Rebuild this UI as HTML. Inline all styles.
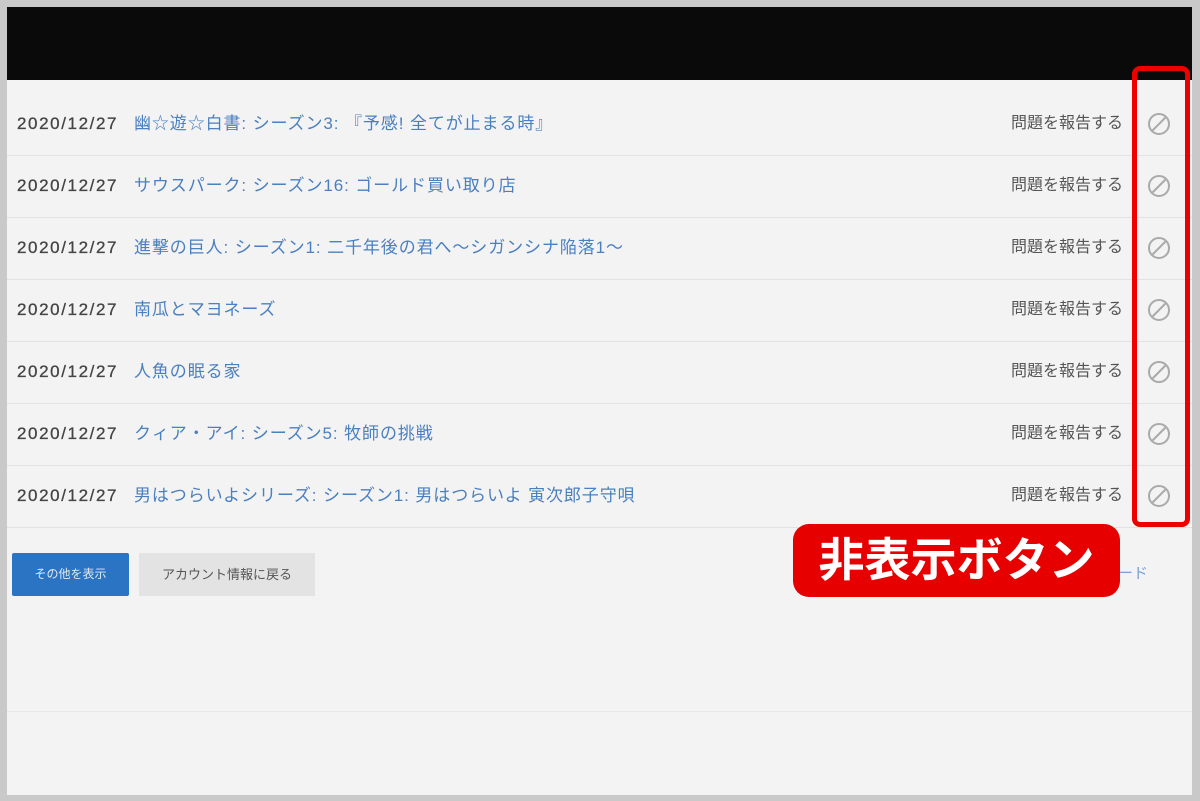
<!DOCTYPE html>
<html><head><meta charset="utf-8"><style>
body{margin:0;width:1200px;height:801px;background:#c9c9c9;position:relative;overflow:hidden;font-family:"Liberation Sans","Noto Sans CJK JP",sans-serif}
.page{position:absolute;left:7px;top:7px;width:1185px;height:788px;background:#f3f3f3}
.hdr{position:absolute;left:0;top:0;width:1185px;height:73px;background:#0a0a0a}
.row{position:absolute;left:0;width:1185px;height:62px;border-bottom:1px solid #e2e2e2;font-size:15px}
.row span{position:absolute;top:0;height:62px;line-height:62px;white-space:nowrap}
.d{left:10px;color:#444;font-size:17px;letter-spacing:1.6px;-webkit-text-stroke:0.3px #444}
.t{left:127px;color:#4a7fc0;font-size:17px;letter-spacing:0.9px}
.r{right:69px;color:#555;font-size:16px;letter-spacing:0px}
.ic{position:absolute;left:1141px;top:20px;width:22px;height:22px;border:2px solid #aaa;border-radius:50%;box-sizing:border-box}
.ic:after{content:"";position:absolute;left:8px;top:0px;width:2px;height:18px;background:#aaa;transform:rotate(45deg)}
.b1{position:absolute;left:5px;top:546px;width:117px;height:43px;background:#2b74c3;color:#dfe8f5;font-size:12px;text-align:center;line-height:43px;border-radius:2px}
.b2{position:absolute;left:132px;top:546px;width:176px;height:43px;background:#e3e3e3;color:#555;font-size:13px;text-align:center;line-height:43px}
.red{position:absolute;left:1132px;top:66px;width:58px;height:461px;border:5px solid #e00;border-radius:8px;box-sizing:border-box}
.lbl{position:absolute;left:793px;top:524px;width:327px;height:73px;background:#e60000;border-radius:16px;color:#fff;font-weight:bold;font-size:46px;text-align:center;line-height:73px;letter-spacing:0px}
.dl{position:absolute;left:1118px;top:562px;color:#7a9fd0;font-size:15px}
</style></head><body>
<div class="page">
<div class="hdr"></div>
<div class="row" style="top:86px"><span class="d">2020/12/27</span><span class="t">幽☆遊☆白書: シーズン3: 『予感! 全てが止まる時』</span><span class="r">問題を報告する</span><i class="ic"></i></div>
<div class="row" style="top:148px"><span class="d">2020/12/27</span><span class="t">サウスパーク: シーズン16: ゴールド買い取り店</span><span class="r">問題を報告する</span><i class="ic"></i></div>
<div class="row" style="top:210px"><span class="d">2020/12/27</span><span class="t">進撃の巨人: シーズン1: 二千年後の君へ～シガンシナ陥落1～</span><span class="r">問題を報告する</span><i class="ic"></i></div>
<div class="row" style="top:272px"><span class="d">2020/12/27</span><span class="t">南瓜とマヨネーズ</span><span class="r">問題を報告する</span><i class="ic"></i></div>
<div class="row" style="top:334px"><span class="d">2020/12/27</span><span class="t">人魚の眠る家</span><span class="r">問題を報告する</span><i class="ic"></i></div>
<div class="row" style="top:396px"><span class="d">2020/12/27</span><span class="t">クィア・アイ: シーズン5: 牧師の挑戦</span><span class="r">問題を報告する</span><i class="ic"></i></div>
<div class="row" style="top:458px"><span class="d">2020/12/27</span><span class="t">男はつらいよシリーズ: シーズン1: 男はつらいよ 寅次郎子守唄</span><span class="r">問題を報告する</span><i class="ic"></i></div>
<div class="b1">その他を表示</div>
<div class="b2">アカウント情報に戻る</div>
<div class="row" style="top:640px;height:64px;border-bottom:1px solid #e8e8e8"></div>
</div>
<div class="dl">ード</div>
<div class="red"></div>
<div class="lbl">非表示ボタン</div>
</body></html>
